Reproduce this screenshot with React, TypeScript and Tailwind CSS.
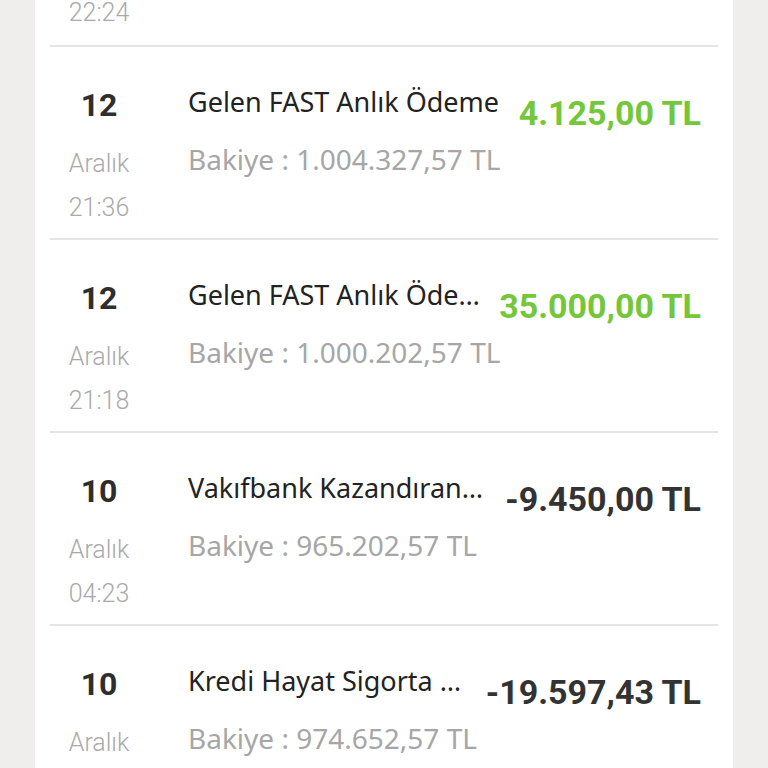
import React from "react";

type Tx = {
  day: string;
  month: string;
  time: string;
  title: string;
  balance: string;
  amount: string;
  income: boolean;
};

const txs: Tx[] = [
  { day: "12", month: "Aralık", time: "21:36", title: "Gelen FAST Anlık Ödeme", balance: "Bakiye : 1.004.327,57 TL", amount: "4.125,00 TL", income: true },
  { day: "12", month: "Aralık", time: "21:18", title: "Gelen FAST Anlık Ödeme", balance: "Bakiye : 1.000.202,57 TL", amount: "35.000,00 TL", income: true },
  { day: "10", month: "Aralık", time: "04:23", title: "Vakıfbank Kazandıran Kampanya", balance: "Bakiye : 965.202,57 TL", amount: "-9.450,00 TL", income: false },
  { day: "10", month: "Aralık", time: "03:55", title: "Kredi Hayat Sigorta Primi", balance: "Bakiye : 974.652,57 TL", amount: "-19.597,43 TL", income: false },
];

function Row({ tx }: { tx: Tx }) {
  return (
    <div className="flex h-[193px] border-b-2 border-[#e4e4e4] pt-[38px]">
      {/* date column */}
      <div className="flex w-[98px] shrink-0 flex-col items-center font-['Roboto',sans-serif]">
        <div className="text-[32px] font-bold leading-[40px] text-[#2e2e2e]">{tx.day}</div>
        <div className="mt-[17px] text-[25px] font-light leading-[44px] text-[#a9a9a9]">{tx.month}</div>
        <div className="text-[25px] font-light leading-[44px] text-[#a9a9a9]">{tx.time}</div>
      </div>
      {/* details */}
      <div className="ml-[40px] mr-[17px] flex min-w-0 flex-1 flex-col">
        <div className="flex items-start">
          <div className="-mt-[3px] min-w-0 flex-1 truncate font-['Noto_Sans',sans-serif] text-[27px] leading-[40px] text-[#222]">
            {tx.title}
          </div>
          <div
            className={
              "ml-[18px] mt-[8px] shrink-0 font-['Roboto',sans-serif] text-[34px] font-bold leading-[40px] " +
              (tx.income ? "text-[#74c73a]" : "text-[#333333]")
            }
          >
            {tx.amount}
          </div>
        </div>
        <div className="mt-[6px] whitespace-nowrap font-['Noto_Sans',sans-serif] text-[28px] leading-[40px] text-[#a6a6a6]">
          {tx.balance}
        </div>
      </div>
    </div>
  );
}

export default function App() {
  return (
    <div className="h-[768px] w-[768px] overflow-hidden bg-[#efeeec]">
      <div className="mx-[35px] min-h-[768px] bg-white px-[15px]">
        <div className="-mt-[9px] border-b-2 border-[#e4e4e4] pb-[10px]">
          <div className="w-[98px] text-center font-['Roboto',sans-serif] text-[25px] font-light leading-[44px] text-[#a9a9a9]">
            22:24
          </div>
        </div>
        {txs.map((tx, i) => (
          <Row key={i} tx={tx} />
        ))}
      </div>
    </div>
  );
}
